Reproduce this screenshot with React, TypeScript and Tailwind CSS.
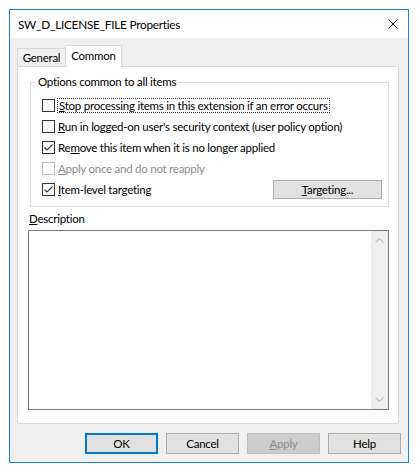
import React from "react";

function Check({ checked, disabled }: { checked?: boolean; disabled?: boolean }) {
  return (
    <span
      className={
        disabled
          ? "w-[13px] h-[13px] shrink-0 border border-[#bcbcbc] bg-white flex items-center justify-center"
          : "w-[13px] h-[13px] shrink-0 border border-[#333333] bg-white flex items-center justify-center"
      }
    >
      {checked && (
        <svg width="11" height="11" viewBox="0 0 11 11">
          <path d="M1.5 5.5 L4 8 L9.5 2.5" stroke="#333333" strokeWidth="1.1" fill="none" />
        </svg>
      )}
    </span>
  );
}

function Btn({ children, kind }: { children: React.ReactNode; kind?: "default" | "disabled" }) {
  if (kind === "default")
    return (
      <div className="w-[73px] h-[21px] border-2 border-[#0078d7] bg-[#e1e1e1] flex items-center justify-center text-black">
        {children}
      </div>
    );
  if (kind === "disabled")
    return (
      <div className="w-[73px] h-[21px] border border-[#bfbfbf] bg-[#cccccc] flex items-center justify-center text-[#8d8d8d]">
        {children}
      </div>
    );
  return (
    <div className="w-[73px] h-[21px] border border-[#adadad] bg-[#e1e1e1] flex items-center justify-center text-black">
      {children}
    </div>
  );
}

export default function App() {
  return (
    <div className="w-[419px] h-[474px] bg-white pt-[9px] pl-[9px] font-['Lato','Liberation_Sans',sans-serif] text-[11.5px] tracking-[-0.25px] leading-[16px] text-black whitespace-nowrap">
      <div className="w-[400px] h-[454px] border border-[#1883d7] flex flex-col">
        {/* title bar */}
        <div className="h-[28px] shrink-0 bg-white flex items-center pl-[8px] pr-[10px]">
          <span className="pt-[1px] text-[11.8px]">SW_D_LICENSE_FILE Properties</span>
          <svg className="ml-auto" width="10" height="10" viewBox="0 0 10 10">
            <path d="M0.5 0.5 L9.5 9.5 M9.5 0.5 L0.5 9.5" stroke="#000" strokeWidth="1" />
          </svg>
        </div>
        {/* body */}
        <div className="flex-1 bg-[#f0f0f0] pl-[7px] pr-[9px] pt-[7px] flex flex-col">
          {/* tabs */}
          <div className="h-[21px] flex items-end">
            <div className="w-[49px] h-[18px] border border-b-0 border-[#d9d9d9] bg-[#f0f0f0] flex items-center justify-center pt-[1px]">
              General
            </div>
            <div className="relative z-10 -ml-px -mb-px w-[57px] h-[22px] border border-b-0 border-[#d9d9d9] bg-white flex items-start justify-center pt-[2px]">
              Common
            </div>
          </div>
          {/* panel */}
          <div className="h-[358px] border border-[#d9d9d9] bg-white flex flex-col">
            {/* groupbox */}
            <div className="relative mt-[15px] ml-[12px] mr-[9px] h-[125px] border border-[#dcdcdc] pt-[12px]">
              <span className="absolute -top-[9px] left-[5px] bg-white px-[2px]">Options common to all items</span>
              <div className="h-[21px] flex items-center pl-[11px]">
                <Check />
                <span className="ml-[2px] border border-dotted border-[#333] px-px leading-[13px]">
                  <span className="underline">S</span>top processing items in this extension if an error occurs
                </span>
              </div>
              <div className="h-[21px] flex items-center pl-[11px]">
                <Check />
                <span className="ml-[3px]">
                  <span className="underline">R</span>un in logged-on user's security context (user policy option)
                </span>
              </div>
              <div className="h-[21px] flex items-center pl-[11px]">
                <Check checked />
                <span className="ml-[3px]">
                  Re<span className="underline">m</span>ove this item when it is no longer applied
                </span>
              </div>
              <div className="h-[21px] flex items-center pl-[11px]">
                <Check disabled />
                <span className="ml-[3px] text-[#8c8c8c]">
                  <span className="underline">A</span>pply once and do not reapply
                </span>
              </div>
              <div className="h-[21px] flex items-center pl-[11px] pr-[6px]">
                <Check checked />
                <span className="ml-[3px]">
                  <span className="underline">I</span>tem-level targeting
                </span>
                <div className="ml-auto w-[109px] h-[19px] border border-[#adadad] bg-[#e1e1e1] flex items-center justify-center">
                  <span>
                    <span className="underline">T</span>argeting...
                  </span>
                </div>
              </div>
            </div>
            {/* description */}
            <div className="mt-[4px] ml-[11px]">
              <span className="underline">D</span>escription
            </div>
            <div className="mt-[3px] ml-[10px] w-[361px] h-[180px] border border-[#7a7a7a] bg-white flex justify-end">
              <div className="w-[17px] h-full bg-[#f0f0f0] flex flex-col items-center justify-between py-[7px]">
                <svg width="9" height="5" viewBox="0 0 9 5">
                  <path d="M0.5 4.5 L4.5 0.8 L8.5 4.5" stroke="#c2c2c2" strokeWidth="1.3" fill="none" />
                </svg>
                <svg width="9" height="5" viewBox="0 0 9 5">
                  <path d="M0.5 0.5 L4.5 4.2 L8.5 0.5" stroke="#c2c2c2" strokeWidth="1.3" fill="none" />
                </svg>
              </div>
            </div>
          </div>
          {/* buttons */}
          <div className="mt-[9px] flex justify-end gap-[8px] mr-[-2px]">
            <Btn kind="default">OK</Btn>
            <Btn>Cancel</Btn>
            <Btn kind="disabled">
              <span>
                <span className="underline">A</span>pply
              </span>
            </Btn>
            <Btn>Help</Btn>
          </div>
        </div>
      </div>
    </div>
  );
}
